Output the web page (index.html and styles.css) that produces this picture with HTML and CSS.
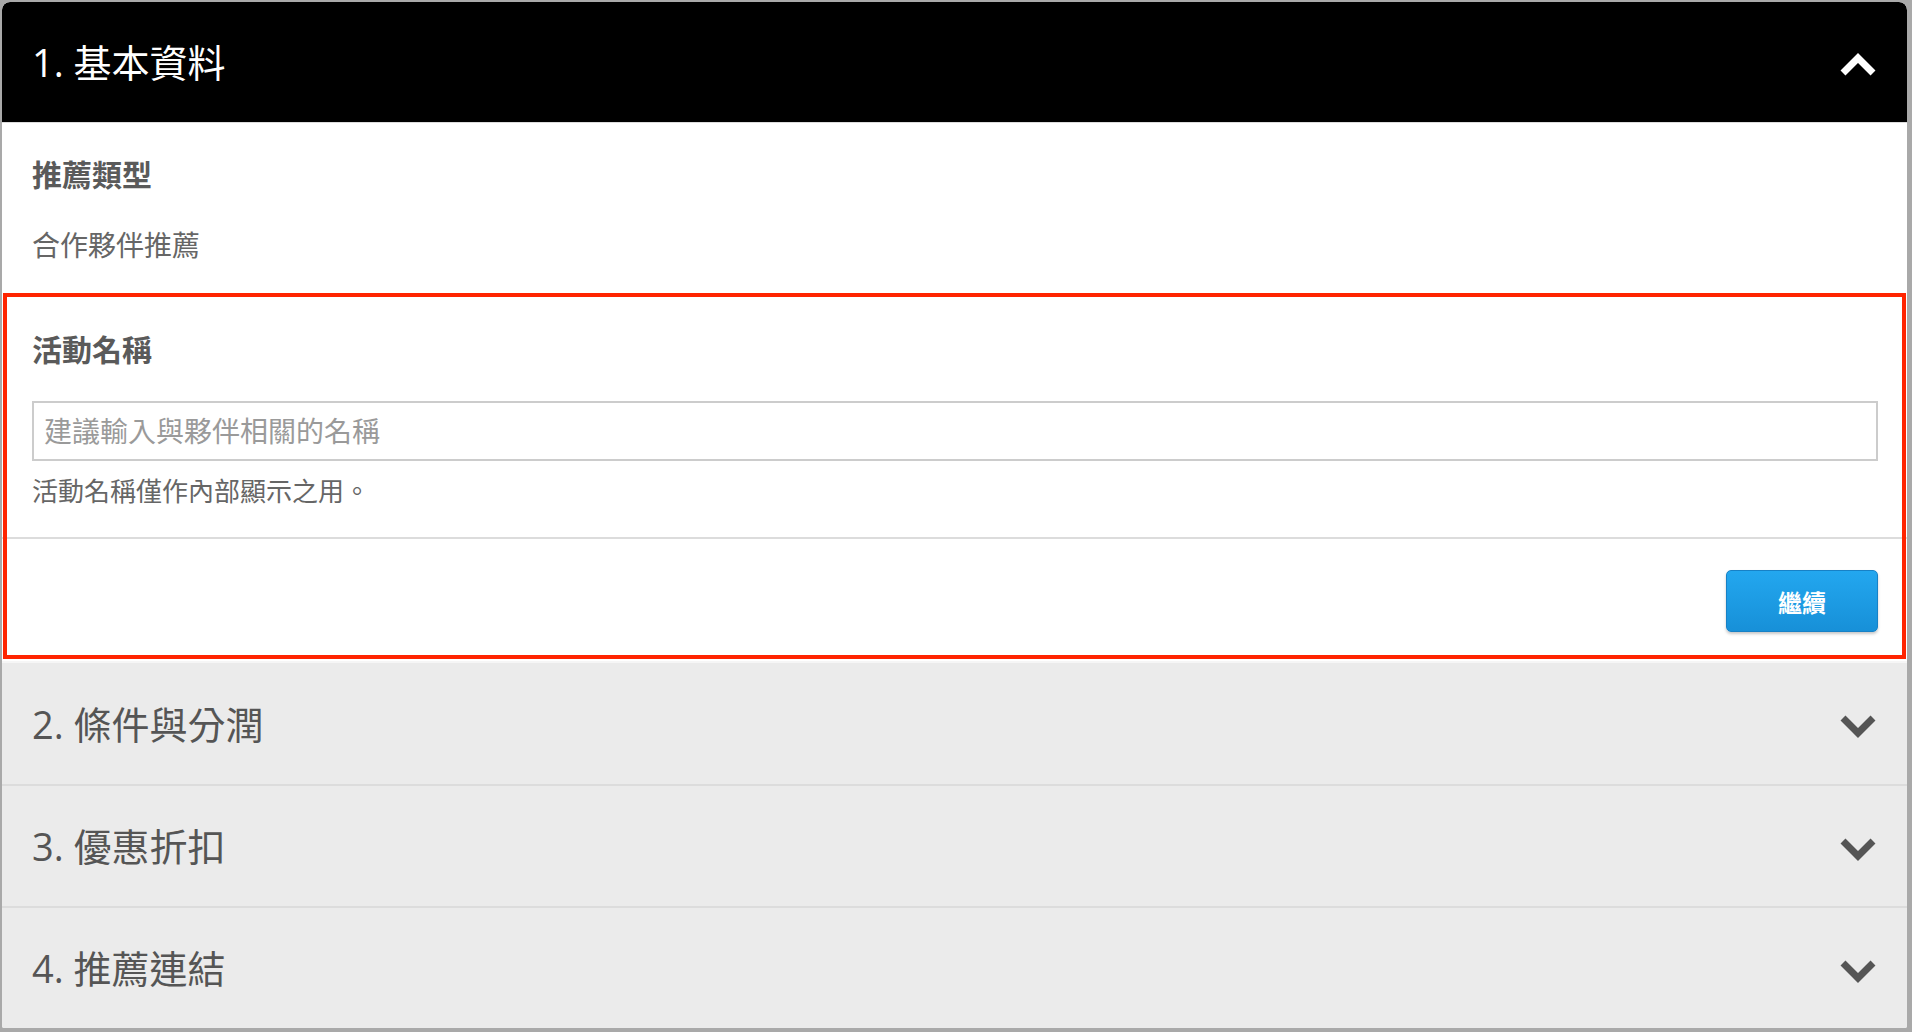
FILE: index.html
```html
<!DOCTYPE html>
<html lang="zh-Hant">
<head>
<meta charset="utf-8">
<title>推薦設定</title>
<link rel="stylesheet" href="styles.css">
</head>
<body>
<div class="frame">
  <section class="acc acc-open">
    <div class="acc-head">
      <span class="acc-title">1. 基本資料</span>
      <svg class="chev chev-up" width="36" height="24" viewBox="0 0 36 24"><path d="M3 21 L18 6 L33 21" fill="none" stroke="currentColor" stroke-width="7"/></svg>
    </div>
    <div class="acc-body">
      <div class="field field-type">
        <div class="label">推薦類型</div>
        <div class="value">合作夥伴推薦</div>
      </div>
      <div class="highlight">
        <div class="field field-name">
          <div class="label">活動名稱</div>
          <input class="text-input" type="text" placeholder="建議輸入與夥伴相關的名稱">
          <div class="help">活動名稱僅作內部顯示之用。</div>
        </div>
        <div class="actions">
          <button class="btn" type="button">繼續</button>
        </div>
      </div>
    </div>
  </section>
  <section class="acc acc-closed first-closed">
    <div class="acc-head">
      <span class="acc-title">2. 條件與分潤</span>
      <svg class="chev chev-down" width="36" height="24" viewBox="0 0 36 24"><path d="M3 3 L18 18 L33 3" fill="none" stroke="currentColor" stroke-width="7"/></svg>
    </div>
  </section>
  <section class="acc acc-closed">
    <div class="acc-head">
      <span class="acc-title">3. 優惠折扣</span>
      <svg class="chev chev-down" width="36" height="24" viewBox="0 0 36 24"><path d="M3 3 L18 18 L33 3" fill="none" stroke="currentColor" stroke-width="7"/></svg>
    </div>
  </section>
  <section class="acc acc-closed last-closed">
    <div class="acc-head">
      <span class="acc-title">4. 推薦連結</span>
      <svg class="chev chev-down" width="36" height="24" viewBox="0 0 36 24"><path d="M3 3 L18 18 L33 3" fill="none" stroke="currentColor" stroke-width="7"/></svg>
    </div>
  </section>
</div>
</body>
</html>
```
FILE: styles.css
```css
* { box-sizing: border-box; }
html, body {
  margin: 0;
  padding: 0;
  background: #a9a9a9;
}
body {
  font-family: "Open Sans", "Noto Sans CJK TC", sans-serif;
  color: #555;
}
.frame {
  margin: 2px 5px 4px 2px;
  height: 1026px;
  background: #ebebeb;
  border-radius: 8px 8px 2px 2px;
  overflow: hidden;
  display: flex;
  flex-direction: column;
}
.acc-head {
  display: flex;
  align-items: center;
  justify-content: space-between;
  padding: 0 31px 0 30px;
  font-size: 38px;
  line-height: 40px;
}
.acc-open .acc-head {
  height: 120px;
  background: #000;
  color: #fff;
  border-radius: 8px 8px 0 0;
}
.acc-body {
  border-top: 1px solid #dcdcdc;
  background: #fff;
}
.chev {
  display: block;
  flex: none;
}
.chev-up { margin-top: 4px; color: #fff; }
.chev-down { margin-top: 7px; color: #555; }

.field {
  padding: 0 29px 0 30px;
}
.field-type {
  height: 170px;
  padding-top: 32px;
}
.label {
  font-size: 30px;
  line-height: 40px;
  font-weight: 700;
  color: #5a5a5a;
}
.value {
  margin-top: 30px;
  font-size: 28px;
  line-height: 40px;
  color: #666;
}
.highlight {
  position: relative;
}
.highlight::after {
  content: "";
  position: absolute;
  top: 0;
  left: 1px;
  right: 1px;
  bottom: 2px;
  border: 4px solid #ff2400;
  pointer-events: none;
}
.field-name {
  padding-top: 37px;
  padding-bottom: 28px;
  border-bottom: 2px solid #dcdcdc;
}
.text-input {
  display: block;
  width: 100%;
  height: 60px;
  margin: 31px 0 0;
  padding: 0 10px;
  border: 2px solid #cccccc;
  border-radius: 0;
  background: #fff;
  font-family: "Open Sans", "Noto Sans CJK TC", sans-serif;
  font-size: 28px;
  color: #555;
  outline: none;
}
.text-input::placeholder {
  color: #9a9a9a;
}
.help {
  margin-top: 12px;
  font-size: 26px;
  line-height: 36px;
  color: #666;
}
.actions {
  display: flex;
  justify-content: flex-end;
  padding: 31px 29px 29px 30px;
}
.btn {
  width: 152px;
  height: 62px;
  border: 1px solid #1781c6;
  border-radius: 5px;
  background: linear-gradient(#23a7ef, #1790d8);
  box-shadow: 0 2px 3px rgba(0, 0, 0, 0.22);
  color: #fff;
  font-family: "Open Sans", "Noto Sans CJK TC", sans-serif;
  font-size: 24px;
  font-weight: 700;
  padding: 0;
}

.acc-closed .acc-head {
  height: 120px;
  background: #ebebeb;
  color: #555;
}
.acc-closed {
  border-bottom: 2px solid #dcdcdc;
}
.first-closed {
  border-top: 2px solid #f6f6f6;
}
.first-closed .acc-head {
  height: 121px;
}
.last-closed {
  border-bottom: 0;
}
```
